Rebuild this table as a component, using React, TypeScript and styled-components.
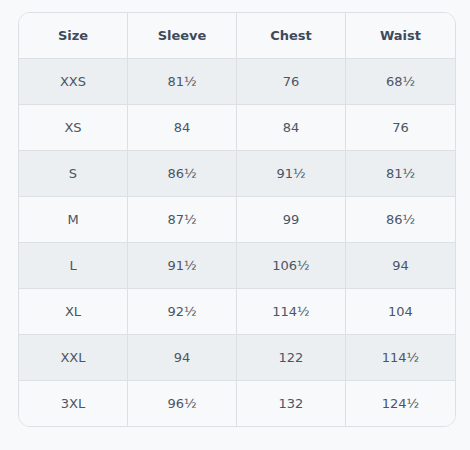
import React from "react";
import styled, { createGlobalStyle } from "styled-components";

const Global = createGlobalStyle`
  html, body { margin: 0; padding: 0; background: #f8f9fb; }
  body { font-family: "DejaVu Sans", Verdana, sans-serif; }
`;

const Page = styled.div`
  padding: 12px 0 0 18px;
`;

const Card = styled.div`
  width: 436px;
  border: 1px solid #dcdfe3;
  border-radius: 12px;
  overflow: hidden;
  background: #f8f9fb;
`;

const Table = styled.table`
  width: 100%;
  border-collapse: separate;
  border-spacing: 0;
  table-layout: fixed;
`;

const Row = styled.tr<{ $shade?: boolean }>`
  background: ${(p) => (p.$shade ? "#eceff1" : "#f8f9fb")};
`;

const Cell = styled.td<{ $last?: boolean; $bottom?: boolean }>`
  height: 45px;
  padding: 0;
  text-align: center;
  vertical-align: middle;
  font-size: 13px;
  color: #4b5565;
  border-right: ${(p) => (p.$last ? "none" : "1px solid #dcdfe3")};
  border-bottom: ${(p) => (p.$bottom ? "none" : "1px solid #dcdfe3")};
`;

const Head = styled(Cell).attrs({ as: "th" })`
  font-weight: bold;
  color: #3e4a5b;
`;

const headers = ["Size", "Sleeve", "Chest", "Waist"];
const rows = [
  ["XXS", "81½", "76", "68½"],
  ["XS", "84", "84", "76"],
  ["S", "86½", "91½", "81½"],
  ["M", "87½", "99", "86½"],
  ["L", "91½", "106½", "94"],
  ["XL", "92½", "114½", "104"],
  ["XXL", "94", "122", "114½"],
  ["3XL", "96½", "132", "124½"],
];

export default function App() {
  return (
    <>
      <Global />
      <Page>
        <Card>
          <Table>
            <thead>
              <Row>
                {headers.map((h, i) => (
                  <Head key={h} $last={i === headers.length - 1}>
                    {h}
                  </Head>
                ))}
              </Row>
            </thead>
            <tbody>
              {rows.map((r, ri) => (
                <Row key={r[0]} $shade={ri % 2 === 0}>
                  {r.map((c, ci) => (
                    <Cell
                      key={ci}
                      $last={ci === r.length - 1}
                      $bottom={ri === rows.length - 1}
                    >
                      {c}
                    </Cell>
                  ))}
                </Row>
              ))}
            </tbody>
          </Table>
        </Card>
      </Page>
    </>
  );
}
